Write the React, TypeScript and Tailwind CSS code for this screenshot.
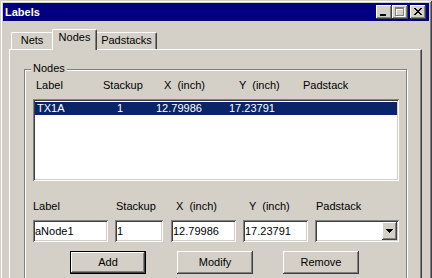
import React from 'react';

const raised =
  'shadow-[inset_-1px_-1px_#404040,inset_1px_1px_#ffffff,inset_-2px_-2px_#808080,inset_2px_2px_#d4d0c8]';
const sunken =
  'shadow-[inset_1px_1px_#808080,inset_-1px_-1px_#ffffff,inset_2px_2px_#404040,inset_-2px_-2px_#d4d0c8]';

const CaptionButton = ({ children, className = '' }: { children: React.ReactNode; className?: string }) => (
  <div className={`w-[16px] h-[14px] bg-[#d4d0c8] ${raised} ${className}`}>
    <svg width="16" height="14" viewBox="0 0 16 14" shapeRendering="crispEdges">
      {children}
    </svg>
  </div>
);

const Field = ({ value, className }: { value: string; className: string }) => (
  <input
    readOnly
    defaultValue={value}
    className={`h-[22px] bg-white pl-[2px] leading-[13px] outline-none ${sunken} ${className}`}
  />
);

const Button = ({ label, className = '' }: { label: string; className?: string }) => (
  <div className={`w-[76px] h-[23px] flex items-center justify-center bg-[#d4d0c8] ${raised} ${className}`}>
    {label}
  </div>
);

export default function App() {
  return (
    <div className="w-[432px] h-[278px] overflow-hidden bg-[#d4d0c8] font-['Liberation_Sans',Arial,sans-serif] text-[11px] leading-[13px] text-black">
      <div className="h-[300px] p-[3px] flex flex-col shadow-[inset_1px_1px_#d4d0c8,inset_-1px_-1px_#404040,inset_2px_2px_#ffffff,inset_-2px_-2px_#808080]">
        {/* title bar */}
        <div className="h-[18px] bg-[#000080] flex items-start pl-[2px] pr-[3px]">
          <span className="mt-[3px] font-bold text-white">Labels</span>
          <div className="ml-auto mt-[2px] flex">
            <CaptionButton>
              <rect x="4" y="9" width="6" height="2" fill="#000" />
            </CaptionButton>
            <CaptionButton>
              <g fill="#ffffff">
                <rect x="4" y="3" width="9" height="2" />
                <rect x="4" y="3" width="1" height="9" />
                <rect x="12" y="3" width="1" height="9" />
                <rect x="4" y="11" width="9" height="1" />
              </g>
              <g fill="#808080">
                <rect x="3" y="2" width="9" height="2" />
                <rect x="3" y="2" width="1" height="9" />
                <rect x="11" y="2" width="1" height="9" />
                <rect x="3" y="10" width="9" height="1" />
              </g>
            </CaptionButton>
            <CaptionButton className="ml-[2px]">
              <g fill="#000">
                <rect x="4" y="3" width="2" height="1" />
                <rect x="10" y="3" width="2" height="1" />
                <rect x="5" y="4" width="2" height="1" />
                <rect x="9" y="4" width="2" height="1" />
                <rect x="6" y="5" width="4" height="1" />
                <rect x="7" y="6" width="2" height="1" />
                <rect x="6" y="7" width="4" height="1" />
                <rect x="5" y="8" width="2" height="1" />
                <rect x="9" y="8" width="2" height="1" />
                <rect x="4" y="9" width="2" height="1" />
                <rect x="10" y="9" width="2" height="1" />
              </g>
            </CaptionButton>
          </div>
        </div>

        {/* body */}
        <div className="flex-1 flex flex-col pl-[6px] pr-[7px] pt-[8px]">
          {/* tabs */}
          <div className="h-[20px] flex items-end pl-[2px]">
            <div className="w-[41px] h-[17px] flex justify-center pt-[1px] border-l border-t border-white rounded-tl-[2px]">
              Nets
            </div>
            <div className="relative z-10 w-[45px] h-[21px] -mb-[1px] flex justify-center pt-[1px] bg-[#d4d0c8] border-l border-t border-white border-r border-r-[#404040] shadow-[inset_-1px_0_#808080] rounded-t-[2px]">
              Nodes
            </div>
            <div className="w-[60px] h-[17px] flex justify-center pt-[1px] border-t border-white border-r border-r-[#404040] shadow-[inset_-1px_0_#808080] rounded-tr-[2px]">
              Padstacks
            </div>
          </div>

          {/* tab panel */}
          <div className="flex-1 border-l border-t border-white border-r border-r-[#404040] shadow-[inset_-1px_0_#808080]">
            <div className="relative mt-[19px] ml-[14px] w-[383px] border border-[#808080] shadow-[1px_1px_0_#ffffff,inset_1px_1px_0_#ffffff] pl-[8px] pt-[9px] pb-[14px]">
              <span className="absolute left-[6px] top-[-8px] px-[2px] bg-[#d4d0c8]">Nodes</span>

              <div className="flex h-[13px] pl-[3px] whitespace-pre">
                <span className="w-[67px]">Label</span>
                <span className="w-[61px]">Stackup</span>
                <span className="w-[75px]">X  (inch)</span>
                <span className="w-[64px]">Y  (inch)</span>
                <span>Padstack</span>
              </div>

              <div className={`mt-[7px] w-[366px] h-[82px] bg-white pt-[3px] px-[2px] ${sunken}`}>
                <div className="flex h-[13px] pl-[2px] bg-[#0a246a] text-white">
                  <span className="w-[80px]">TX1A</span>
                  <span className="w-[39px]">1</span>
                  <span className="w-[73px]">12.79986</span>
                  <span>17.23791</span>
                </div>
              </div>

              <div className="mt-[19px] flex h-[13px] whitespace-pre">
                <span className="w-[82px]">Label</span>
                <span className="w-[56px] pl-[1px]">Stackup</span>
                <span className="w-[72px] pl-[5px]">X  (inch)</span>
                <span className="w-[72px] pl-[6px]">Y  (inch)</span>
                <span className="pl-[1px]">Padstack</span>
              </div>

              <div className="mt-[7px] flex">
                <Field value="aNode1" className="w-[75px]" />
                <Field value="1" className="w-[48px] ml-[7px]" />
                <Field value="12.79986" className="w-[65px] ml-[8px]" />
                <Field value="17.23791" className="w-[65px] ml-[7px]" />
                <div className={`ml-[7px] w-[84px] h-[22px] bg-white flex justify-end p-[2px] ${sunken}`}>
                  <div className={`w-[15px] h-full bg-[#d4d0c8] flex items-center justify-center ${raised}`}>
                    <svg width="7" height="4" viewBox="0 0 7 4" shapeRendering="crispEdges">
                      <rect x="0" y="0" width="7" height="1" fill="#000" />
                      <rect x="1" y="1" width="5" height="1" fill="#000" />
                      <rect x="2" y="2" width="3" height="1" fill="#000" />
                      <rect x="3" y="3" width="1" height="1" fill="#000" />
                    </svg>
                  </div>
                </div>
              </div>

              <div className="mt-[9px] flex pl-[37px]">
                <Button label="Add" className="border border-black" />
                <Button label="Modify" className="ml-[31px]" />
                <Button label="Remove" className="ml-[30px]" />
              </div>
            </div>
          </div>
        </div>
      </div>
    </div>
  );
}
